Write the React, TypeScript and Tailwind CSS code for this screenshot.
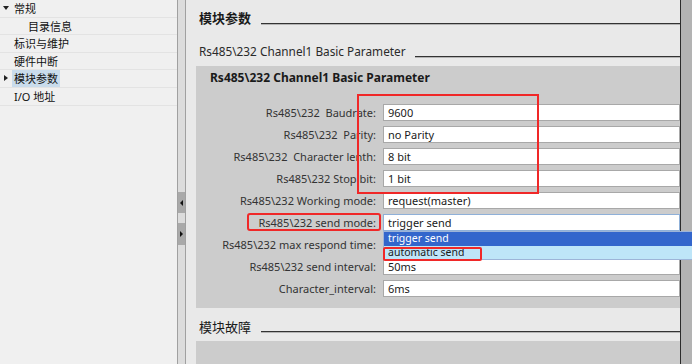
const FONT = "font-['Noto_Sans','Noto_Sans_CJK_SC',sans-serif]";

const tree = [
  { text: "常规", indent: 14, arrow: "down" },
  { text: "目录信息", indent: 28 },
  { text: "标识与维护", indent: 14 },
  { text: "硬件中断", indent: 14 },
  { text: "模块参数", indent: 14, arrow: "right", selected: true },
  { text: "I/O 地址", indent: 14 },
];

const fields = [
  { label: "Rs485\\232  Baudrate:", value: "9600" },
  { label: "Rs485\\232  Parity:", value: "no Parity" },
  { label: "Rs485\\232  Character lenth:", value: "8 bit" },
  { label: "Rs485\\232 Stop bit:", value: "1 bit" },
  { label: "Rs485\\232 Working mode:", value: "request(master)" },
  { label: "Rs485\\232 send mode:", value: "trigger send", focused: true },
  { label: "Rs485\\232 max respond time:", value: "" },
  { label: "Rs485\\232 send interval:", value: "50ms" },
  { label: "Character_interval:", value: "6ms" },
];

function Rule() {
  return <div className="mb-[2px] h-[2px] flex-1 border-t border-[#333333] bg-[#b4b4b4]" />;
}

export default function App() {
  return (
    <div className={`relative flex h-[364px] w-[692px] overflow-hidden ${FONT}`}>
      {/* tree */}
      <div className="w-[177px] shrink-0 bg-[#f0f0f0]">
        {tree.map((t) => (
          <div key={t.text} className="relative h-[17.6px] border-b border-[#e3e3e3]">
            {t.arrow === "down" && (
              <span className="absolute left-[3px] top-[6px] h-0 w-0 border-x-[3.5px] border-t-[4px] border-x-transparent border-t-[#222]" />
            )}
            {t.arrow === "right" && (
              <span className="absolute left-[4px] top-[5px] h-0 w-0 border-y-[3.5px] border-l-[4px] border-y-transparent border-l-[#222]" />
            )}
            <span
              className={`absolute top-0 h-[17px] px-[2px] text-[11px] leading-[17px] text-[#111] ${
                t.selected ? "bg-[#c9dcec]" : ""
              }`}
              style={{ left: t.indent - 2 }}
            >
              {t.text}
            </span>
          </div>
        ))}
      </div>

      {/* splitter */}
      <div className="flex w-[9px] shrink-0 flex-col border-x border-[#a0a0a0] bg-[#dcdcdc] pt-[192px]">
        <div className="flex h-[21px] items-center justify-center bg-[#a9a9a9]">
          <span className="h-0 w-0 border-y-[3px] border-r-[3px] border-y-transparent border-r-[#111]" />
        </div>
        <div className="mt-[10px] flex h-[22px] items-center justify-center bg-[#a9a9a9]">
          <span className="h-0 w-0 border-y-[3px] border-l-[3px] border-y-transparent border-l-[#111]" />
        </div>
      </div>

      {/* content */}
      <div className="flex flex-1 bg-[#e9e9e9]">
        <div className="flex flex-1 flex-col pl-[10px]">
          <div className="mt-[9px] flex h-[18px] items-end pl-[3px]">
            <span className="mr-[10px] text-[13px] font-bold leading-[18px] text-[#1a1a1a]">模块参数</span>
            <Rule />
          </div>
          <div className="mt-[15px] flex h-[18px] items-end pl-[3px]">
            <span className="mr-[9px] text-[11.8px] leading-[18px] text-[#2a2a2a]">
              Rs485\232 Channel1 Basic Parameter
            </span>
            <Rule />
          </div>

          <div className="mt-[6px] bg-[#cccccc] pb-[11px] pt-[4px]">
            <div className="h-[16px] pl-[14px] text-[12px] font-bold leading-[16px] text-[#1a1a1a]">
              Rs485\232 Channel1 Basic Parameter
            </div>
            <div className="mt-[18px] flex flex-col gap-[5px]">
              {fields.map((f) => (
                <div key={f.label} className="flex h-[17px] items-center">
                  <div className="w-[180px] whitespace-pre text-right text-[11px] leading-[17px] text-[#333]">
                    {f.label}
                  </div>
                  <div
                    className={`ml-[7px] h-[17px] flex-1 border bg-white pl-[4px] text-[11px] leading-[15px] text-[#1a1a1a] ${
                      f.focused ? "border-[#8fb0d8]" : "border-[#a8a8a8]"
                    }`}
                  >
                    {f.value}
                  </div>
                </div>
              ))}
            </div>
          </div>

          <div className="mt-[10px] flex h-[18px] items-end pl-[3px]">
            <span className="mr-[10px] text-[13px] leading-[18px] text-[#1a1a1a]">模块故障</span>
            <div className="mb-[3px] h-[2px] flex-1 border-t border-[#333333] bg-[#b4b4b4]" />
          </div>
          <div className="mt-[5px] flex-1 bg-[#cccccc]" />
        </div>
        <div className="w-[12px] shrink-0 border-l border-[#2b2b2b] bg-[#b3b3b3]" />
      </div>

      {/* dropdown list */}
      <div className="absolute left-[383px] top-[231px] w-[309px] border-y border-l border-[#9db4d8] bg-white text-[10.5px]">
        <div className="h-[14px] overflow-hidden bg-[#3366cc] pl-[4px] leading-[13px] text-white">trigger send</div>
        <div className="h-[13px] overflow-hidden bg-[#bee5f8] pl-[4px] leading-[12px] text-[#1a1a1a]">automatic send</div>
      </div>

      {/* annotations */}
      <div className="absolute left-[357px] top-[94px] h-[100px] w-[182px] border-2 border-[#f02828]" />
      <div className="absolute left-[247px] top-[213px] h-[18px] w-[134px] rounded-[3px] border-2 border-[#f02828]" />
      <div className="absolute left-[383px] top-[247px] h-[14px] w-[99px] rounded-[2px] border-2 border-[#f02828]" />
    </div>
  );
}
